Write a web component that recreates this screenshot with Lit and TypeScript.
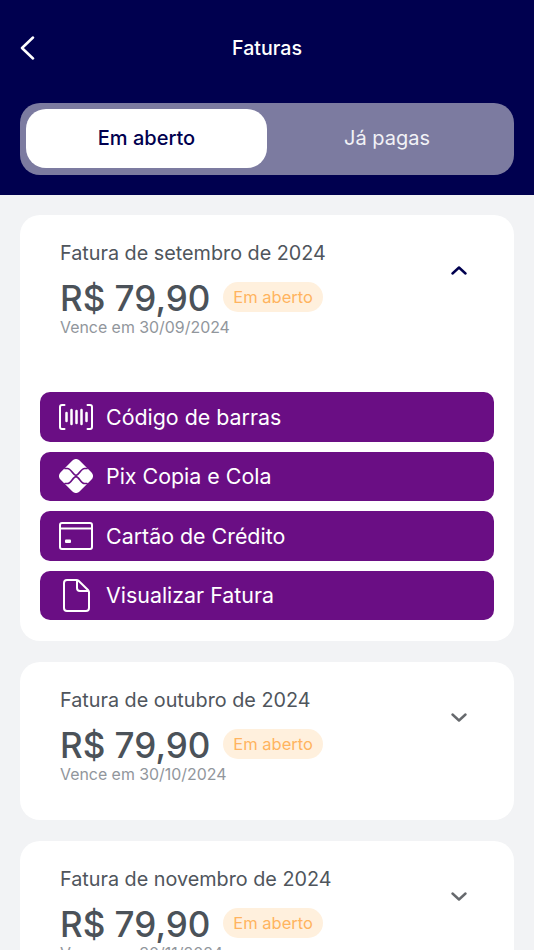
import { LitElement, html, css, svg } from "lit";
import { customElement } from "lit/decorators.js";

const icons = {
  barcode: svg`<svg class="ic" viewBox="0 0 34 34" fill="none" stroke="#fff" stroke-width="2" stroke-linecap="round" stroke-linejoin="round"><path d="M5.500 5H3a2 2 0 0 0-2 2v20a2 2 0 0 0 2 2h2.500M28.500 5H31a2 2 0 0 1 2 2v20a2 2 0 0 1-2 2h-2.500"/><path stroke-width="2.500" d="M7.500 13v8M12.500 10v14M17.500 11v12M22.500 10v14M27.500 13v8"/></svg>`,
  pix: svg`<svg class="ic" viewBox="0 0 34 34"><rect x="3.500" y="3.500" width="27" height="27" rx="5" fill="#fff" transform="rotate(45 17 17)"/><path fill="none" stroke="#6a0e84" stroke-width="1.700" stroke-linecap="round" d="M6 9.500h2.500c3.500 0 5.500 6.800 8.500 6.800s5-6.800 8.500-6.800H28M6 24.500h2.500c3.500 0 5.500-6.800 8.500-6.800s5 6.800 8.500 6.800H28"/></svg>`,
  card: svg`<svg class="ic" viewBox="0 0 34 34" fill="none" stroke="#fff" stroke-width="2" stroke-linejoin="round"><rect x="1" y="4" width="32" height="26" rx="2"/><path d="M1 9.500h32"/><rect x="6" y="20.500" width="6" height="3.500" rx="1" fill="#fff" stroke="none"/></svg>`,
  doc: svg`<svg class="doc" viewBox="0 0 27 33" fill="none" stroke="#fff" stroke-width="2" stroke-linejoin="round"><path d="M4 1h9.500c.8 0 1.500.3 2 .8L25 11c.6.6 1 1.400 1 2.200V29a3 3 0 0 1-3 3H4a3 3 0 0 1-3-3V4a3 3 0 0 1 3-3z"/><path d="M14 1.500V9a3 3 0 0 0 3 3h8.500"/></svg>`,
};

const chevron = (up: boolean) => svg`<svg class="chev ${up ? "up" : ""}" viewBox="0 0 16 10" fill="none" stroke-width="2.400" stroke-linecap="round" stroke-linejoin="round"><path d="${up ? "M1.500 7.500L8 1.500l6.500 6" : "M1.500 1.500L8 7.500l6.500-6"}"/></svg>`;

@customElement("app-root")
export class AppRoot extends LitElement {
  static styles = css`
    :host {
      display: block;
      width: 534px;
      height: 950px;
      overflow: hidden;
      background: #f2f3f5;
      font-family: Inter, "Noto Sans", sans-serif;
      color: #4b5259;
    }
    header {
      background: #00004f;
      height: 195px;
      box-sizing: border-box;
      padding: 0 20px;
      display: flex;
      flex-direction: column;
    }
    .nav {
      height: 103px;
      box-sizing: border-box;
      padding-bottom: 7px;
      display: flex;
      align-items: center;
      justify-content: center;
      position: relative;
    }
    .back {
      position: absolute;
      left: 0;
      top: 36px;
      width: 16px;
      height: 24px;
    }
    .title {
      color: #fff;
      font-size: 19.600px;
      font-weight: 500;
    }
    .tabs {
      height: 72px;
      box-sizing: border-box;
      padding: 6px 7px 7px 6px;
      background: #7c7ba0;
      border-radius: 20px;
      display: grid;
      grid-template-columns: 241px 1fr;
    }
    .tab {
      display: flex;
      align-items: center;
      justify-content: center;
      font-size: 20px;
      border-radius: 20px;
      color: #f2f2f6;
      padding-bottom: 1px;
    }
    .tab.on {
      background: #fff;
      color: #00004f;
      font-weight: 500;
    }
    main {
      padding: 20px;
      display: flex;
      flex-direction: column;
      gap: 21px;
    }
    .card {
      background: #fff;
      border-radius: 20px;
      padding: 26px 20px 21px;
    }
    .head {
      padding: 0 20px;
      display: flex;
      align-items: center;
      justify-content: space-between;
    }
    .t {
      font-size: 19.800px;
      line-height: 24px;
      color: #4f555c;
    }
    .row {
      display: flex;
      align-items: center;
      gap: 13px;
      margin-top: 14px;
    }
    .amt {
      font-size: 35px;
      line-height: 38px;
      font-weight: 450;
      color: #4b5259;
    }
    .badge {
      background: #fff0dd;
      color: #ffb45f;
      font-size: 16.500px;
      height: 30px;
      display: flex;
      align-items: center;
      padding: 0 10px;
      border-radius: 15px;
      margin-bottom: 2px;
    }
    .due {
      font-size: 15.900px;
      line-height: 20px;
      color: #91969c;
      margin-top: 1px;
    }
    .chev {
      width: 16px;
      height: 10px;
      stroke: #66696d;
      margin-right: 7px;
      margin-top: -38px;
    }
    .chev.up {
      stroke: #00004f;
    }
    .spacer {
      height: 14px;
    }
    .actions {
      display: flex;
      flex-direction: column;
      gap: 10px;
      margin-top: 54px;
    }
    .btn {
      height: 49.500px;
      background: #6a0e84;
      border-radius: 10px;
      display: flex;
      align-items: center;
      color: #fff;
      font-size: 21.400px;
      padding-left: 19px;
      gap: 13px;
    }
    .slot {
      width: 34px;
      display: flex;
      justify-content: center;
    }
    .ic {
      width: 34px;
      height: 34px;
      display: block;
    }
    .doc {
      width: 27px;
      height: 33px;
      display: block;
    }
  `;

  private card(month: string, date: string, open = false) {
    return html`<section class="card">
      <div class="head">
        <div>
          <div class="t">Fatura de ${month} de 2024</div>
          <div class="row">
            <span class="amt">R$ 79,90</span>
            <span class="badge">Em aberto</span>
          </div>
          <div class="due">Vence em ${date}</div>
        </div>
        ${chevron(open)}
      </div>
      ${open
        ? html`<div class="actions">
            ${[
              [icons.barcode, "Código de barras"],
              [icons.pix, "Pix Copia e Cola"],
              [icons.card, "Cartão de Crédito"],
              [icons.doc, "Visualizar Fatura"],
            ].map(
              ([ic, label]) =>
                html`<div class="btn"><span class="slot">${ic}</span>${label}</div>`
            )}
          </div>`
        : html`<div class="spacer"></div>`}
    </section>`;
  }

  render() {
    return html`
      <header>
        <div class="nav">
          <svg class="back" viewBox="0 0 16 24" fill="none" stroke="#fff" stroke-width="2.500" stroke-linecap="round" stroke-linejoin="round"><path d="M13 1.500L2 12l11 10.500"/></svg>
          <span class="title">Faturas</span>
        </div>
        <div class="tabs">
          <div class="tab on">Em aberto</div>
          <div class="tab">Já pagas</div>
        </div>
      </header>
      <main>
        ${this.card("setembro", "30/09/2024", true)}
        ${this.card("outubro", "30/10/2024")}
        ${this.card("novembro", "30/11/2024")}
      </main>
    `;
  }
}
